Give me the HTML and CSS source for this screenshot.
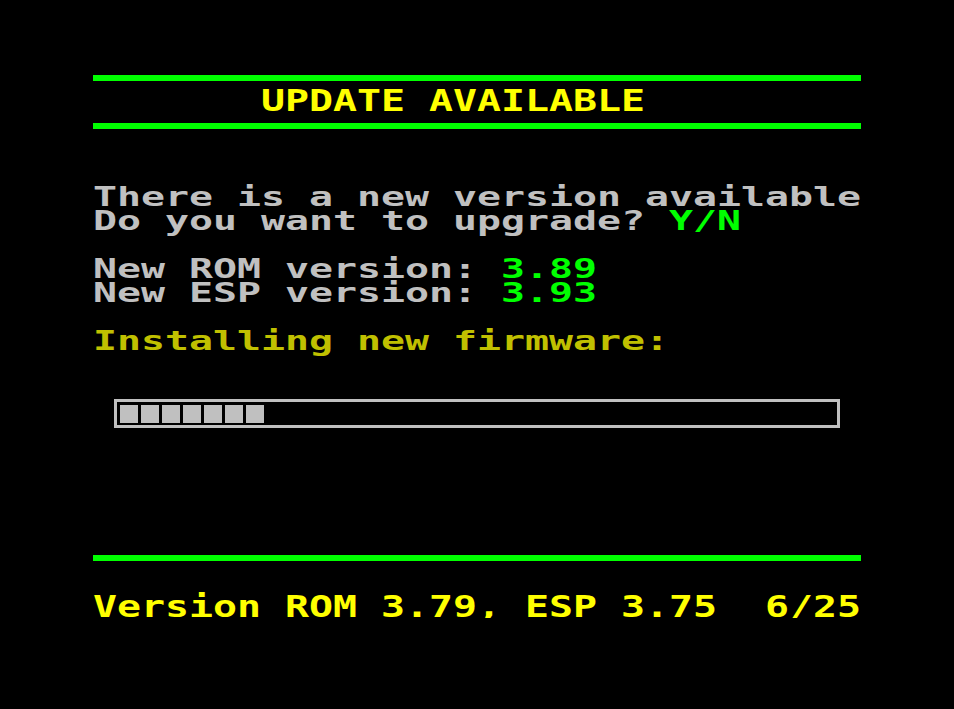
FILE: index.html
```
<!DOCTYPE html>
<html lang="en">
<head>
    <meta charset="UTF-8">
    <title>Update available</title>
    <link rel="stylesheet" href="styles.css">
</head>
<body>
    <div class="screen">
        <div class="bar top"></div>
        <div class="line big yellow">       UPDATE AVAILABLE</div>
        <div class="bar"></div>

        <div class="msg first">
            <div class="line">There is a new version available</div>
            <div class="line">Do you want to upgrade? <span class="green">Y/N</span></div>
        </div>

        <div class="msg">
            <div class="line">New ROM version: <span class="green">3.89</span></div>
            <div class="line">New ESP version: <span class="green">3.93</span></div>
        </div>

        <div class="msg">
            <div class="line olive">Installing new firmware:</div>
        </div>

        <div class="progress">
            <div class="block"></div>
            <div class="block"></div>
            <div class="block"></div>
            <div class="block"></div>
            <div class="block"></div>
            <div class="block"></div>
            <div class="block"></div>
        </div>

        <div class="bar bottom"></div>
        <div class="line big yellow footer">Version ROM 3.79, ESP 3.75  6/25</div>
    </div>
</body>
</html>
```

FILE: styles.css
```
body {
    margin: 0;
    padding: 0;
    background-color: #000;
    font-family: 'DejaVu Sans Mono', 'Liberation Mono', monospace;
}
.screen {
    width: 768px;
    margin-left: 93px;
    padding-top: 64px;
}
.bar {
    height: 6px;
    margin: 11px 0 7px;
    background-color: #00ff00;
}
.bar.bottom {
    margin-top: 127px;
    margin-bottom: 0;
}
/* 8x8 style cells: every glyph stretched to a 24px column */
.line {
    width: 520px;
    height: 24px;
    line-height: 26px;
    font-size: 27px;
    font-weight: bold;
    white-space: pre;
    color: #c0c0c0;
    transform: scaleX(1.4765);
    transform-origin: left center;
}
.line.big {
    transform: scale(1.4765, 1.1);
}
.msg {
    margin-top: 24px;
}
.msg.first {
    margin-top: 55px;
}
.green { color: #00ff00; }
.yellow { color: #ffff00; }
.olive { color: #c0c000; }
.footer {
    margin-top: 33px;
}
.progress {
    box-sizing: border-box;
    display: flex;
    gap: 3px;
    width: 726px;
    height: 29px;
    margin: 47px 0 0 21px;
    padding: 3px;
    border: 3px solid #c0c0c0;
}
.block {
    width: 18px;
    height: 18px;
    background-color: #c0c0c0;
}
```
